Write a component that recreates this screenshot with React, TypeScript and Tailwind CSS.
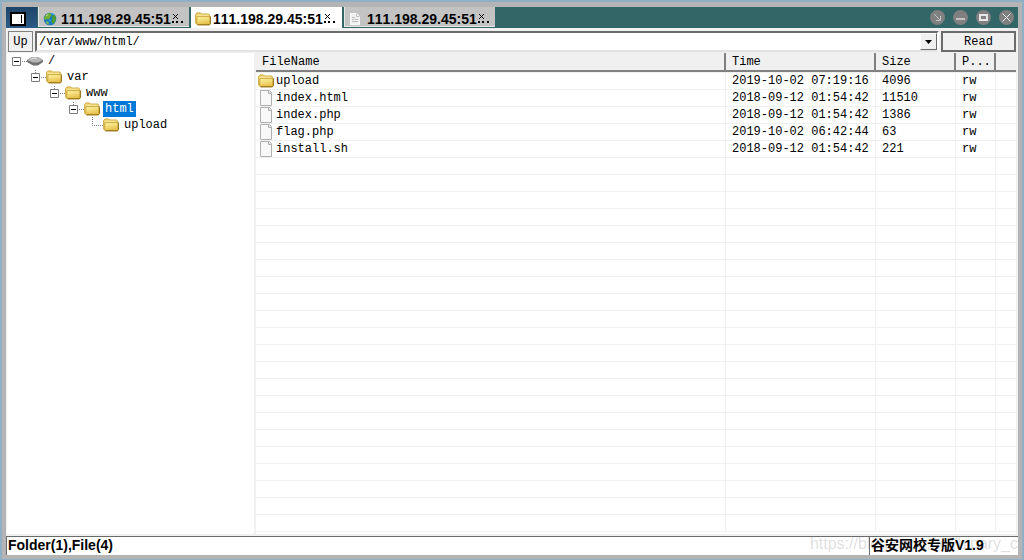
import type { ReactNode } from 'react'

const files = [
  { name: 'upload', time: '2019-10-02 07:19:16', size: '4096', perm: 'rw', folder: true },
  { name: 'index.html', time: '2018-09-12 01:54:42', size: '11510', perm: 'rw', folder: false },
  { name: 'index.php', time: '2018-09-12 01:54:42', size: '1386', perm: 'rw', folder: false },
  { name: 'flag.php', time: '2019-10-02 06:42:44', size: '63', perm: 'rw', folder: false },
  { name: 'install.sh', time: '2018-09-12 01:54:42', size: '221', perm: 'rw', folder: false },
]

const emptyRows = Array.from({ length: 22 }, (_, i) => i)

function FolderIcon() {
  return (
    <svg viewBox="0 0 16 14" className="w-4 h-3.5 shrink-0">
      <defs>
        <linearGradient id="folder" x1="0" y1="0" x2="0.3" y2="1">
          <stop offset="0" stopColor="#fff6a6" />
          <stop offset="1" stopColor="#e6c04a" />
        </linearGradient>
      </defs>
      <path d="M.6 2.500L2 .9h3.500L6.600 2h7.200l.6 1v8L2 12.500.6 11z" fill="#ecd06a" stroke="#c9a437" strokeWidth=".9" />
      <path d="M1.500 3.200h12" stroke="#fdf3b4" strokeWidth=".8" />
      <path d="M2 4.600h13.300v7.200l-.9 1H2.600L1.600 11.500z" fill="url(#folder)" stroke="#c39d33" strokeWidth=".8" />
      <path d="M15.300 4.600v7.200l-.9 1H2.600" fill="none" stroke="#8f6a10" />
    </svg>
  )
}

function FileIcon() {
  return (
    <svg viewBox="0 0 16 16" className="w-4 h-4 shrink-0">
      <path d="M2.500.5h9l2 2v13h-11z" fill="#f8f8f8" stroke="#b0b0b0" />
      <path d="M10.500.5v3h3" fill="#dcdcdc" stroke="#b0b0b0" />
    </svg>
  )
}

function DriveIcon() {
  return (
    <svg viewBox="0 0 16 12" className="w-4 h-3 shrink-0">
      <path d="M0 5l5-3h6l5 3v2l-5 3.500H6L0 7z" fill="#6f6f6f" />
      <path d="M0 5l5-3h6l5 3-5 2.500H6z" fill="#b4b4b4" />
      <path d="M4 4.500l2-1.200h4" stroke="#dedede" fill="none" />
    </svg>
  )
}

function GlobeIcon() {
  return (
    <svg viewBox="0 0 14 14" className="w-3.5 h-3.5 shrink-0">
      <circle cx="7" cy="7" r="6.300" fill="#1b78c2" />
      <path d="M2 4l3-3 3 .5.500 2-1.500 2-1 2-2-.5L2 8 1 6z" fill="#6fae35" />
      <path d="M9.500 3.500l2.500-.5 1 4-1 3-2 2-1.500-2 .5-2z" fill="#4c9f2d" />
      <path d="M3 9l2.500 1 .5 2.500L3.500 11.500z" fill="#7cbf49" />
      <path d="M8 1.500l3 1M6 8l2 1" stroke="#36b4e8" />
      <path d="M3 4l2-1.500" stroke="#c9ea7b" />
    </svg>
  )
}

function PageIcon() {
  return (
    <svg viewBox="0 0 12 14" className="w-3 h-3.5 shrink-0">
      <path d="M1.500 1.500h6l3 3v8h-9z" fill="#f0f0f0" stroke="#fafafa" />
      <path d="M7.500 1.500v3h3" fill="none" stroke="#c4c4c4" />
      <path d="M3 5.500h3M3 7.500h2M6 7.500h3M3 9.500h6" stroke="#bcbcbc" />
    </svg>
  )
}

function Tab({ icon, active }: { icon: ReactNode; active?: boolean }) {
  return (
    <button
      role="tab"
      aria-selected={!!active}
      className={
        active
          ? 'w-[151px] h-[21px] flex items-center bg-white pt-[3px] pl-[3px] text-black'
          : 'w-[151px] h-5 flex items-center bg-[#c3c3c3] border-l border-b border-[#e6e6e6] pt-1 pl-[3px] text-black'
      }
    >
      <span className="w-[19px] flex justify-start shrink-0 pl-px">{icon}</span>
      <span className="whitespace-nowrap text-sm leading-4 font-bold [font-kerning:none]">111.198.29.45:51</span>
      <svg viewBox="0 0 14 12" className="w-3.5 h-3 shrink-0">
        <path d="M2 1l5 5M7 1L2 6" stroke="#000" fill="none" />
        <path d="M1 8h2v2H1zM5 8h2v2H5zM10 8h2v2h-2z" fill="#000" />
      </svg>
    </button>
  )
}

function WindowButton({ label, children }: { label: string; children: ReactNode }) {
  return (
    <button aria-label={label} className="w-[15px] h-[15px]">
      <svg viewBox="0 0 15 15" className="w-[15px] h-[15px]" fill="none" stroke="#e8e8e8">
        <circle cx="7.500" cy="7.500" r="7.500" fill="#808080" stroke="none" />
        {children}
      </svg>
    </button>
  )
}

function TreeItem({ label, icon, indent, root, open, selected }: {
  label: string
  icon: ReactNode
  indent: string
  root?: boolean
  open?: boolean
  selected?: boolean
}) {
  return (
    <li role="treeitem" aria-selected={!!selected} className={`h-4 flex items-center ${indent}`}>
      <svg viewBox="0 0 15 16" className="w-[15px] h-4 shrink-0" fill="none">
        {open ? (
          <>
            <path d="M.5 4.500h8v8h-8z" fill="#fff" stroke="#7c7c7c" />
            <path d="M2 8.500h5" stroke="#000" />
            <path d="M10 8.500h5" stroke="#808080" strokeDasharray="1 1" />
            {!root && <path d="M4.500 1v3" stroke="#808080" strokeDasharray="1 1" />}
          </>
        ) : (
          <path d="M4.500 0v8.500H15" stroke="#808080" strokeDasharray="1 1" />
        )}
      </svg>
      {icon}
      <span className={selected ? 'ml-[3px] h-4 px-0.5 bg-[#0078d7] text-white' : 'ml-[3px] h-4 px-0.5'}>{label}</span>
    </li>
  )
}

export default function App() {
  return (
    <div className="min-h-screen flex flex-col bg-[#b4b4b4] border-x-2 border-t-2 border-b border-[#8fafc6] px-1 py-1 font-['Liberation_Mono','Courier_New',monospace] text-xs leading-4 text-black">
      <header className="mt-px h-[21px] flex items-start bg-[#336666] font-['Liberation_Sans',Arial,sans-serif]">
        <button aria-label="Toggle panel" className="w-[31px] h-[21px] flex items-center justify-start pt-0.5 pl-1 bg-linear-to-b from-[#1f4468] to-[#2a5b88] shrink-0">
          <svg viewBox="0 0 16 14" className="w-4 h-3.5">
            <path d="M1 1h14v12H1z" fill="#fff" stroke="#000" strokeWidth="2" />
            <path d="M11.500 3v8" stroke="#000" />
          </svg>
        </button>
        <div role="tablist" className="flex ml-px gap-0.5">
          <Tab icon={<GlobeIcon />} />
          <Tab icon={<FolderIcon />} active />
          <Tab icon={<PageIcon />} />
        </div>
        <div className="ml-auto mr-1 flex h-[21px] items-center gap-2">
          <WindowButton label="Dock">
            <path d="M4 4l6 6M10.500 6v4.500H6" stroke="#c4c4c4" />
          </WindowButton>
          <WindowButton label="Minimize">
            <path d="M3 9h9" stroke="#c4c4c4" strokeWidth="2" />
          </WindowButton>
          <WindowButton label="Maximize">
            <path d="M4 5h7v5H4z" strokeWidth="2" />
          </WindowButton>
          <WindowButton label="Close">
            <path d="M3.500 3.500l8 8M11.500 3.500l-8 8" />
          </WindowButton>
        </div>
      </header>

      <form className="flex h-[25px] items-center bg-[#f0f0f0] pt-0.5 px-0.5" onSubmit={(e) => e.preventDefault()}>
        <button type="button" className="w-[25px] h-[21px] border border-[#808080] bg-[#f0f0f0]">Up</button>
        <div className="ml-0.5 flex flex-1 h-[21px] border-2 border-[#6b6b6b] border-r-white border-b-[#e3e3e3] bg-white">
          <input aria-label="Path" defaultValue="/var/www/html/" className="flex-1 min-w-0 pl-0.5 outline-none" />
          <button type="button" aria-label="Show paths" className="w-[17px] flex items-center justify-center bg-[#f0f0f0] border border-r-[#6b6b6b] border-b-[#6b6b6b] border-white">
            <svg viewBox="0 0 7 4" className="w-[7px] h-1">
              <path d="M0 0h7L3.500 4z" />
            </svg>
          </button>
        </div>
        <button className="ml-0.5 w-[75px] h-[21px] border-2 border-[#6b6b6b] bg-[#f0f0f0]">Read</button>
      </form>

      <div className="flex flex-1 bg-white border-r-2 border-l border-[#f0f0f0]">
        <ul role="tree" className="w-[247px] shrink-0 pl-[5px]">
          <TreeItem label="/" icon={<DriveIcon />} indent="pl-0" root open />
          <TreeItem label="var" icon={<FolderIcon />} indent="pl-[19px]" open />
          <TreeItem label="www" icon={<FolderIcon />} indent="pl-[38px]" open />
          <TreeItem label="html" icon={<FolderIcon />} indent="pl-[57px]" open selected />
          <TreeItem label="upload" icon={<FolderIcon />} indent="pl-[76px]" />
        </ul>
        <div className="flex-1 border-l-2 border-[#f0f0f0]">
          <table className="w-full table-fixed border-separate border-spacing-0 text-left border-b border-[#f0f0f0]">
            <colgroup>
              <col />
              <col className="w-[150px]" />
              <col className="w-20" />
              <col className="w-10" />
              <col className="w-5" />
            </colgroup>
            <thead>
              <tr className="h-[19px] bg-[#f0f0f0]">
                {['FileName', 'Time', 'Size', 'P...'].map((head) => (
                  <th key={head} className="p-0 pt-px pl-1.5 font-normal border-b-2 border-r-2 border-[#808080]">{head}</th>
                ))}
                <td className="p-0 border-b-2 border-[#808080]" />
              </tr>
            </thead>
            <tbody>
              {files.map((file) => (
                <tr key={file.name} className="h-[17px]">
                  <td className="p-0 border-t border-r border-[#f0f0f0]">
                    <div className="flex items-center pl-0.5 gap-0.5 h-4">
                      {file.folder ? <FolderIcon /> : <FileIcon />}
                      <span>{file.name}</span>
                    </div>
                  </td>
                  <td className="p-0 pl-1.5 border-t border-r border-[#f0f0f0] whitespace-nowrap">{file.time}</td>
                  <td className="p-0 pl-1.5 border-t border-r border-[#f0f0f0]">{file.size}</td>
                  <td className="p-0 pl-1.5 border-t border-r border-[#f0f0f0]">{file.perm}</td>
                  <td className="p-0 border-t border-[#f0f0f0]" />
                </tr>
              ))}
              {emptyRows.map((row) => (
                <tr key={row} className="h-[17px]">
                  <td className="p-0 border-t border-r border-[#f0f0f0]" />
                  <td className="p-0 border-t border-r border-[#f0f0f0]" />
                  <td className="p-0 border-t border-r border-[#f0f0f0]" />
                  <td className="p-0 border-t border-r border-[#f0f0f0]" />
                  <td className="p-0 border-t border-[#f0f0f0]" />
                </tr>
              ))}
            </tbody>
          </table>
        </div>
      </div>

      <footer className="relative h-[21px] flex bg-white border-t-2 border-[#f0f0f0] font-['Liberation_Sans','Noto_Sans_CJK_SC',sans-serif] text-sm leading-4 font-bold">
        <div className="flex-1 border-t border-l border-[#6b6b6b] pl-px">Folder(1),File(4)</div>
        <div className="w-[149px] border-t border-l border-[#6b6b6b] pl-px whitespace-nowrap">谷安网校专版V1.9</div>
        <span className="absolute right-0 top-0 text-base leading-4 font-normal text-black/15 whitespace-nowrap">https://blog.csdn.net/binary_c</span>
      </footer>
    </div>
  )
}
